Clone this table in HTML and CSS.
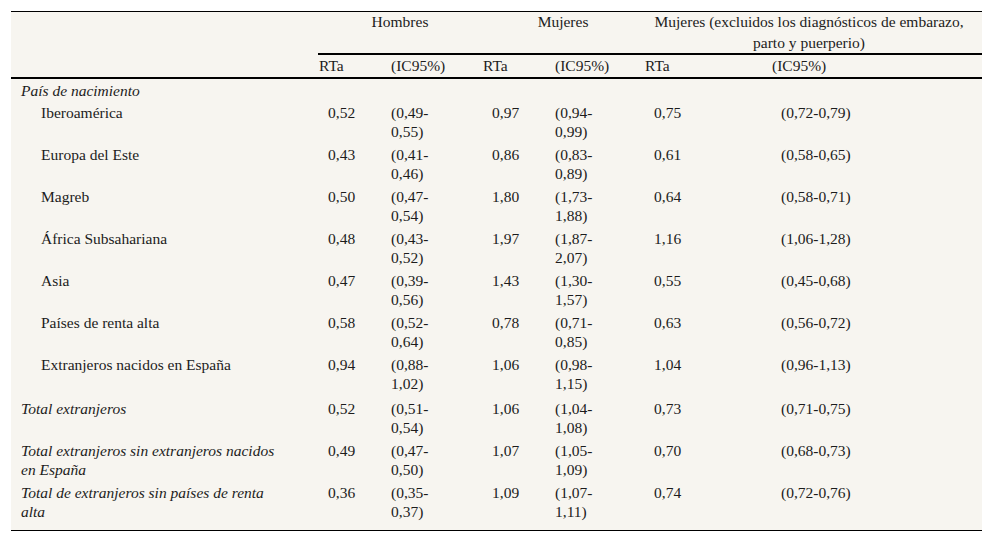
FILE: index.html
```html
<!DOCTYPE html>
<html lang="es">
<head>
<meta charset="utf-8">
<title>RTa por país de nacimiento</title>
<link rel="stylesheet" href="styles.css">
</head>
<body>
<table class="rt">
  <colgroup>
    <col class="c-name">
    <col class="c-rta">
    <col class="c-ic">
    <col class="c-rta">
    <col class="c-ic2">
    <col class="c-rta3">
    <col class="c-ic3">
  </colgroup>
  <thead>
    <tr class="grp">
      <th class="blank" rowspan="2"></th>
      <th colspan="2">Hombres</th>
      <th colspan="2">Mujeres</th>
      <th colspan="2" class="g3">Mujeres (excluidos los diagnósticos de embarazo, parto y puerperio)</th>
    </tr>
    <tr class="sub">
      <th>RTa</th>
      <th>(IC95%)</th>
      <th>RTa</th>
      <th>(IC95%)</th>
      <th>RTa</th>
      <th>(IC95%)</th>
    </tr>
  </thead>
  <tbody>
    <tr class="head-row">
      <td class="name sec">País de nacimiento</td>
      <td></td><td></td><td></td><td></td><td></td><td></td>
    </tr>
    <tr>
      <td class="name ind">Iberoamérica</td>
      <td class="v">0,52</td><td class="ic">(0,49-<br>0,55)</td>
      <td class="v">0,97</td><td class="ic">(0,94-<br>0,99)</td>
      <td class="v">0,75</td><td class="v">(0,72-0,79)</td>
    </tr>
    <tr>
      <td class="name ind">Europa del Este</td>
      <td class="v">0,43</td><td class="ic">(0,41-<br>0,46)</td>
      <td class="v">0,86</td><td class="ic">(0,83-<br>0,89)</td>
      <td class="v">0,61</td><td class="v">(0,58-0,65)</td>
    </tr>
    <tr>
      <td class="name ind">Magreb</td>
      <td class="v">0,50</td><td class="ic">(0,47-<br>0,54)</td>
      <td class="v">1,80</td><td class="ic">(1,73-<br>1,88)</td>
      <td class="v">0,64</td><td class="v">(0,58-0,71)</td>
    </tr>
    <tr>
      <td class="name ind">África Subsahariana</td>
      <td class="v">0,48</td><td class="ic">(0,43-<br>0,52)</td>
      <td class="v">1,97</td><td class="ic">(1,87-<br>2,07)</td>
      <td class="v">1,16</td><td class="v">(1,06-1,28)</td>
    </tr>
    <tr>
      <td class="name ind">Asia</td>
      <td class="v">0,47</td><td class="ic">(0,39-<br>0,56)</td>
      <td class="v">1,43</td><td class="ic">(1,30-<br>1,57)</td>
      <td class="v">0,55</td><td class="v">(0,45-0,68)</td>
    </tr>
    <tr>
      <td class="name ind">Países de renta alta</td>
      <td class="v">0,58</td><td class="ic">(0,52-<br>0,64)</td>
      <td class="v">0,78</td><td class="ic">(0,71-<br>0,85)</td>
      <td class="v">0,63</td><td class="v">(0,56-0,72)</td>
    </tr>
    <tr class="group-end">
      <td class="name ind">Extranjeros nacidos en España</td>
      <td class="v">0,94</td><td class="ic">(0,88-<br>1,02)</td>
      <td class="v">1,06</td><td class="ic">(0,98-<br>1,15)</td>
      <td class="v">1,04</td><td class="v">(0,96-1,13)</td>
    </tr>
    <tr>
      <td class="name sec">Total extranjeros</td>
      <td class="v">0,52</td><td class="ic">(0,51-<br>0,54)</td>
      <td class="v">1,06</td><td class="ic">(1,04-<br>1,08)</td>
      <td class="v">0,73</td><td class="v">(0,71-0,75)</td>
    </tr>
    <tr>
      <td class="name sec">Total extranjeros sin extranjeros nacidos en España</td>
      <td class="v">0,49</td><td class="ic">(0,47-<br>0,50)</td>
      <td class="v">1,07</td><td class="ic">(1,05-<br>1,09)</td>
      <td class="v">0,70</td><td class="v">(0,68-0,73)</td>
    </tr>
    <tr class="last">
      <td class="name sec">Total de extranjeros sin países de renta alta</td>
      <td class="v">0,36</td><td class="ic">(0,35-<br>0,37)</td>
      <td class="v">1,09</td><td class="ic">(1,07-<br>1,11)</td>
      <td class="v">0,74</td><td class="v">(0,72-0,76)</td>
    </tr>
  </tbody>
</table>
</body>
</html>
```

FILE: styles.css
```css
body {
  margin: 0;
  background: #ffffff;
  font-family: "Liberation Serif", "Times New Roman", serif;
  font-size: 15.5px;
  color: #1c1c1c;
}

.rt {
  border-collapse: collapse;
  table-layout: fixed;
  width: 971px;
  margin: 11px 0 0 11px;
  background: #f7f5f0;
  border-top: 1px solid #000;
  border-bottom: 1px solid #000;
}

.c-name { width: 307px; }
.c-rta { width: 72px; }
.c-ic { width: 92px; }
.c-ic2 { width: 90px; }
.c-rta3 { width: 127px; }
.c-ic3 { width: 211px; }

th, td {
  padding: 0;
  font-weight: normal;
  text-align: left;
  vertical-align: top;
}

.grp th {
  line-height: 20.5px;
  text-align: center;
  border-bottom: 2px solid #000;
}

.grp th.g3 {
  padding-right: 8px;
}

.sub th {
  line-height: 21px;
  padding: 0 0 1px 1px;
  border-bottom: 2px solid #000;
}

td {
  line-height: 19px;
  padding: 2px 0;
}

tr.head-row td {
  padding-bottom: 1px;
}

tr.group-end td {
  padding-bottom: 4px;
}

td.name {
  padding-left: 10px;
  padding-right: 32px;
}

td.ind {
  padding-left: 30px;
}

td.sec {
  font-style: italic;
}

td.v {
  padding-left: 10px;
}

td.ic {
  padding-left: 1px;
}

tr.last td {
  padding-bottom: 9px;
}
```
